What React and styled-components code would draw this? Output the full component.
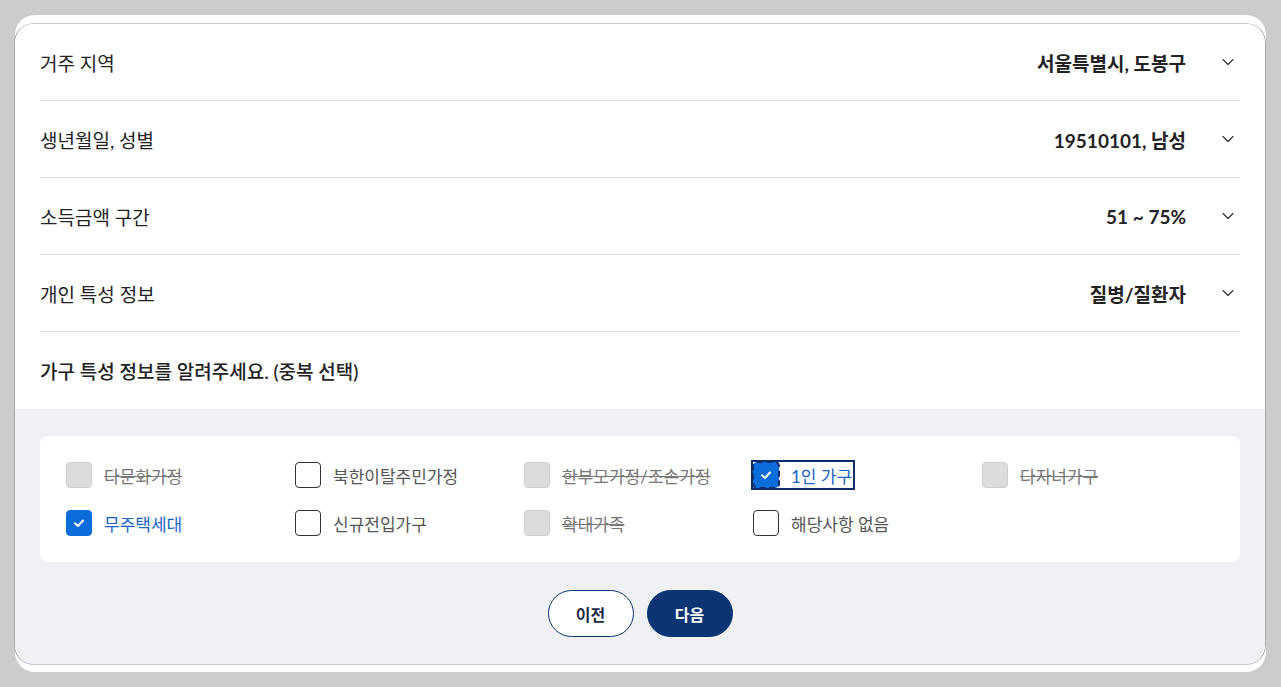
import { createGlobalStyle, styled } from "styled-components";
import { ChevronDown } from "lucide-react";

const GlobalStyle = createGlobalStyle`
    body {
        margin: 0;
        background: #cccccc;
        font-family: "Lato", "Noto Sans CJK KR", sans-serif;
        color: #222;
    }
`;

const rows = [
    { label: "거주 지역", value: "서울특별시, 도봉구" },
    { label: "생년월일, 성별", value: "19510101, 남성" },
    { label: "소득금액 구간", value: "51 ~ 75%" },
    { label: "개인 특성 정보", value: "질병/질환자" },
];

const options = [
    { id: 1, text: "다문화가정", state: "disabled" },
    { id: 2, text: "북한이탈주민가정", state: "off" },
    { id: 3, text: "한부모가정/조손가정", state: "disabled" },
    { id: 4, text: "1인 가구", state: "on", focus: true },
    { id: 5, text: "다자녀가구", state: "disabled" },
    { id: 6, text: "무주택세대", state: "on" },
    { id: 7, text: "신규전입가구", state: "off" },
    { id: 8, text: "확대가족", state: "disabled" },
    { id: 9, text: "해당사항 없음", state: "off" },
];

const Check = () => (
    <svg width="14" height="14" viewBox="0 0 14 14" fill="none">
        <polyline
            points="3,7.3 6,10 11,4.5"
            stroke="#fff"
            strokeWidth="2"
            strokeLinecap="round"
            strokeLinejoin="round"
        />
    </svg>
);

const App = () => {
    return (
        <>
            <GlobalStyle />
            <Frame>
                <Panel>
                    <Summary>
                        {rows.map((r) => (
                            <Row key={r.label}>
                                <RowLabel>{r.label}</RowLabel>
                                <RowValue>
                                    {r.value}
                                    <ChevronDown size={20} strokeWidth={1.4} color="#333" />
                                </RowValue>
                            </Row>
                        ))}
                        <Question>가구 특성 정보를 알려주세요. (중복 선택)</Question>
                    </Summary>
                    <Bottom>
                        <OptionCard>
                            {options.map((o) => (
                                <Option key={o.id} $focus={o.focus}>
                                    <Box $state={o.state} $focus={o.focus}>
                                        {o.state === "on" ? <Check /> : null}
                                    </Box>
                                    <OptionText $state={o.state}>{o.text}</OptionText>
                                </Option>
                            ))}
                        </OptionCard>
                        <Buttons>
                            <Button>이전</Button>
                            <Button $primary>다음</Button>
                        </Buttons>
                    </Bottom>
                </Panel>
            </Frame>
        </>
    );
};

export default App;

const Frame = styled.div`
    margin: 15px 15px 15px 15px;
    background: #fff;
    border-radius: 20px;
    padding: 8px 0 7px;
`;

const Panel = styled.div`
    margin-left: -1px;
    border: 1px solid #c9c9c9;
    border-left-color: #aaa;
    border-right-color: #aaa;
    border-bottom-color: #c5c7d6;
    border-radius: 20px;
    overflow: hidden;
`;

const Summary = styled.div`
    background: #fff;
    padding: 0 25px 0 25px;
`;

const Row = styled.div`
    display: flex;
    justify-content: space-between;
    align-items: center;
    height: 76px;
    border-bottom: 1px solid #dedede;
    padding-right: 2px;
`;

const RowLabel = styled.span`
    font-size: 19px;
    color: #222;
`;

const RowValue = styled.span`
    display: flex;
    align-items: center;
    gap: 32px;
    font-size: 19px;
    font-weight: 700;
    color: #222;
`;

const Question = styled.div`
    height: 77px;
    display: flex;
    align-items: center;
    font-size: 19px;
    font-weight: 500;
    color: #222;
`;

const Bottom = styled.div`
    background: #eff1f5;
    padding: 27px 25px 27px 25px;
`;

const OptionCard = styled.div`
    background: #fff;
    border-radius: 8px;
    padding: 26px 26px;
    display: grid;
    grid-template-columns: repeat(5, 229px);
    row-gap: 22px;
`;

const Option = styled.label`
    display: flex;
    align-items: center;
    gap: 12px;
    height: 26px;
    justify-self: start;
    padding-right: ${(p) => (p.$focus ? "1px" : "0")};
    outline: ${(p) => (p.$focus ? "2px solid #0b2e6b" : "none")};
    outline-offset: 0px;
    cursor: pointer;
`;

const Box = styled.span`
    box-sizing: border-box;
    width: 26px;
    height: 26px;
    border-radius: 4px;
    display: flex;
    align-items: center;
    justify-content: center;
    background: ${(p) =>
        p.$state === "on" ? "#0a6ddb" : p.$state === "disabled" ? "#dcdcdc" : "#fff"};
    border: 1px solid
        ${(p) =>
            p.$state === "on" ? "#0a6ddb" : p.$state === "disabled" ? "#cfcfcf" : "#333"};
    outline: ${(p) => (p.$focus ? "2px dashed #0b2e6b" : "none")};
    outline-offset: -1px;
`;

const OptionText = styled.span`
    font-size: 17px;
    color: ${(p) =>
        p.$state === "on" ? "#1a63c7" : p.$state === "disabled" ? "#777" : "#555"};
    text-decoration: ${(p) => (p.$state === "disabled" ? "line-through" : "none")};
`;

const Buttons = styled.div`
    display: flex;
    justify-content: center;
    gap: 13px;
    margin-top: 28px;
`;

const Button = styled.button`
    width: 86px;
    height: 47px;
    border-radius: 24px;
    border: 1px solid #0b3474;
    background: ${(p) => (p.$primary ? "#0b3474" : "#fff")};
    color: ${(p) => (p.$primary ? "#fff" : "#1a2a44")};
    font-family: "Lato", "Noto Sans CJK KR", sans-serif;
    font-size: 16px;
    font-weight: 700;
    cursor: pointer;
`;
